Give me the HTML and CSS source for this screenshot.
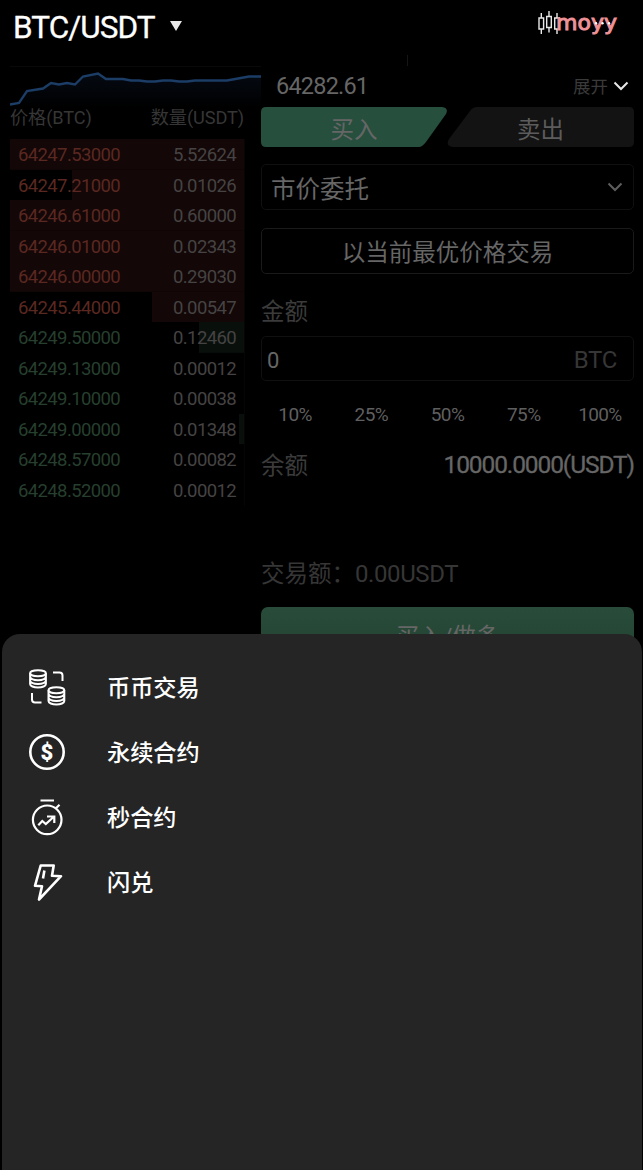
FILE: index.html
```html
<!DOCTYPE html>
<html lang="zh-CN">
<head>
<meta charset="utf-8">
<title>BTC/USDT</title>
<link rel="stylesheet" href="styles.css">
</head>
<body>
<div class="app">
  <header class="header">
    <div class="pair"><span class="pair-name">BTC/USDT</span><span class="caret"></span></div>
    <svg class="logo" width="84" height="30" viewBox="0 0 84 30">
      <g fill="none" stroke="#e8e8e8" stroke-width="1.4">
        <path d="M5.300 3v5M5.300 19v5M3 8h4.600v11H3zM13 1v5.500M13 17.500v5M10.700 6.500h4.600v11h-4.600zM21 3v5M21 19v5M18.700 8h4.600v11h-4.600z"/>
      </g>
      <text class="logo-text" x="20" y="20" textLength="61" lengthAdjust="spacingAndGlyphs">moyy</text>
      <g fill="#fff"><circle cx="60" cy="13.300" r="1.200"/><circle cx="66.500" cy="13.300" r="1.200"/><circle cx="73" cy="13.300" r="1.200"/></g>
    </svg>
  </header>

  <div class="divider"></div>

  <main class="main">
    <section class="book">
      <svg class="chart" width="251" height="42" viewBox="10 66 251 42">
        <defs><linearGradient id="area" x1="0" y1="0" x2="0" y2="1"><stop offset="0" stop-color="#050a12"/><stop offset="1" stop-color="#000"/></linearGradient></defs>
        <path d="M10 66.500h251" stroke="#090909"/>
        <path fill="url(#area)" d="M10 104.500L19 103 27 91 43 88.500 51 83 59 84.500 67 83 75 84.500 83 76.500 98 73.500 106 79H123L131 80.500H139L147 81.500H155L163 80.500H171L179 81.500H187L195 80.500H227L249 76.500H261V108H10z"/>
        <path fill="none" stroke="#1b3d66" stroke-width="2.400" d="M10 104.500L19 103 27 91 43 88.500 51 83 59 84.500 67 83 75 84.500 83 76.500 98 73.500 106 79H123L131 80.500H139L147 81.500H155L163 80.500H171L179 81.500H187L195 80.500H227L249 76.500H261"/>
      </svg>
      <div class="book-head"><span>价格(BTC)</span><span>数量(USDT)</span></div>
      <div class="rows">
        <div class="row sell full"><span>64247.53000</span><b>5.52624</b></div>
        <div class="row sell d2"><span>64247.21000</span><b>0.01026</b></div>
        <div class="row sell full"><span>64246.61000</span><b>0.60000</b></div>
        <div class="row sell full"><span>64246.01000</span><b>0.02343</b></div>
        <div class="row sell full"><span>64246.00000</span><b>0.29030</b></div>
        <div class="row sell d6"><span>64245.44000</span><b>0.00547</b></div>
        <div class="row buy d7"><span>64249.50000</span><b>0.12460</b></div>
        <div class="row buy"><span>64249.13000</span><b>0.00012</b></div>
        <div class="row buy"><span>64249.10000</span><b>0.00038</b></div>
        <div class="row buy d10"><span>64249.00000</span><b>0.01348</b></div>
        <div class="row buy"><span>64248.57000</span><b>0.00082</b></div>
        <div class="row buy"><span>64248.52000</span><b>0.00012</b></div>
      </div>
    </section>

    <section class="trade">
      <div class="quote">
        <span class="price">64282.61</span>
        <span class="expand">展开<svg width="16" height="10" viewBox="0 0 16 10"><path d="M1.500 1.500L8 8l6.500-6.500" fill="none" stroke="#e6e6e6" stroke-width="2"/></svg></span>
      </div>
      <div class="tabs">
        <div class="tab"><svg width="186" height="40" viewBox="0 0 186 40"><path fill="#264f3e" d="M5 0H181q7 1 4 7L165 35q-4 5-7 5H5q-5 0-5-5V5q0-5 5-5z"/></svg><span>买入</span></div>
        <div class="tab"><svg width="187" height="40" viewBox="0 0 187 40"><path fill="#131313" d="M182 0H30q-4 0-7 4L2 32q-4 7 4 8H182q5 0 5-5V5q0-5-5-5z"/></svg><span>卖出</span></div>
      </div>
      <div class="field select"><span>市价委托</span><svg width="16" height="10" viewBox="0 0 16 10"><path d="M1.500 1.500L8 8l6.500-6.500" fill="none" stroke="#5e5e5e" stroke-width="2"/></svg></div>
      <div class="field best">以当前最优价格交易</div>
      <div class="label">金额</div>
      <div class="field amount"><span class="zero">0</span><span class="unit">BTC</span></div>
      <div class="percents"><span>10%</span><span>25%</span><span>50%</span><span>75%</span><span>100%</span></div>
      <div class="balance"><span>余额</span><span class="funds">10000.0000(USDT)</span></div>
      <div class="total">交易额：<span>0.00USDT</span></div>
      <div class="submit">买入/做多</div>
    </section>
  </main>
</div>

<nav class="sheet">
  <div class="item">
    <svg width="40" height="40" viewBox="0 0 40 40" fill="none" stroke="#fff" stroke-width="2">
      <ellipse cx="11" cy="6.200" rx="7.900" ry="3"/><path d="M3.100 6.200v10.800c0 2 3.500 3.500 7.900 3.500s7.900-1.500 7.900-3.500V6.200M3.100 9.800c1 4.500 14.800 4.500 15.800 0M3.100 13.500c1 4.500 14.800 4.500 15.800 0"/>
      <ellipse cx="29.400" cy="23.200" rx="7.900" ry="3"/><path d="M21.500 23.200V34c0 2 3.500 3.500 7.900 3.500s7.900-1.500 7.900-3.500V23.200M21.500 26.800c1 4.500 14.800 4.500 15.800 0M21.500 30.500c1 4.500 14.800 4.500 15.800 0"/>
      <path d="M26 5.500h6.500q3 0 3 3V14M5 26v6.500q0 3 3 3h6.500"/>
    </svg>
    <span>币币交易</span>
  </div>
  <div class="item">
    <svg width="40" height="40" viewBox="0 0 40 40"><circle cx="20" cy="20" r="16.700" fill="none" stroke="#fff" stroke-width="2.600"/><text class="dollar" x="20" y="27.500" text-anchor="middle">$</text></svg>
    <span>永续合约</span>
  </div>
  <div class="item">
    <svg width="40" height="40" viewBox="0 0 40 40" fill="none" stroke="#fff" stroke-width="2.200"><circle cx="20.200" cy="22.800" r="14.300"/><path d="M13.500 3.500H27M28.700 11.500l3.800-3.800M11.300 28.200l4-4.200 3.500 3 8-7.300M20 19.500h7.300v6.500"/></svg>
    <span>秒合约</span>
  </div>
  <div class="item">
    <svg width="40" height="40" viewBox="0 0 40 40" fill="none" stroke="#fff" stroke-width="2.600" stroke-linejoin="round"><path d="M13.700 3.500h13L25 13.800l9 .400L12 37.500l3-13.300-7-.400zM17.400 8.500L16 16.500"/></svg>
    <span>闪兑</span>
  </div>
</nav>
</body>
</html>
```

FILE: styles.css
```css
* { box-sizing: border-box; }
body {
  margin: 0;
  height: 1170px;
  overflow: hidden;
  background: #000;
  color: #666;
  font-family: Roboto, "Noto Sans CJK SC", sans-serif;
}
.app { height: 1170px; }
.header {
  height: 55px;
  padding: 0 23px 0 13px;
  display: flex;
  justify-content: space-between;
}
.pair { display: flex; align-items: center; gap: 15px; height: 54px; color: #fff; }
.pair-name { font-size: 31.500px; letter-spacing: -0.950px; -webkit-text-stroke: 0.300px #fff; }
.caret {
  border: 6.500px solid transparent;
  border-top: 10px solid #e8e8e8;
  border-bottom: 0;
  margin-top: -3px;
}
.logo { margin-top: 10px; }
.logo-text { font: 22px "DejaVu Sans", sans-serif; fill: #ee9298; stroke: #ee9298; stroke-width: 1px; }
.divider { width: 1px; height: 11px; margin-left: 407px; background: #151515; }
.main { display: flex; padding: 0 9px 0 10px; }

.book { width: 251px; flex: none; }
.chart { display: block; }
.book-head {
  display: flex;
  justify-content: space-between;
  width: 234px;
  height: 31px;
  line-height: 20px;
  font-size: 18.200px;
  letter-spacing: -0.100px;
  color: #363636;
}
.rows { width: 235px; border-right: 1px solid #050505; }
.row {
  height: 30.550px;
  padding: 1.500px 8px 0;
  display: flex;
  justify-content: space-between;
  align-items: center;
  font-size: 18.500px;
  letter-spacing: -0.620px;
  background-repeat: no-repeat;
  background-position: right;
}
.row b { font-weight: 400; color: #454343; }
.sell { color: #5b2821; background-image: linear-gradient(#130707, #130707); }
.buy { color: #263f2e; background-image: linear-gradient(#09100c, #09100c); background-size: 0 100%; }
.full { background-size: 100% 100%; }
.d2 { background-size: 172px 100%; }
.d6 { background-size: 92px 100%; }
.d7 { background-size: 45px 100%; }
.d10 { background-size: 5px 100%; }

.trade { flex: 1; display: flex; flex-direction: column; font-size: 23.500px; }
.quote {
  height: 41px;
  padding: 0 5px 1.500px 15px;
  display: flex;
  justify-content: space-between;
  align-items: center;
}
.price { font-size: 23.500px; letter-spacing: -0.800px; }
.expand { display: flex; align-items: center; gap: 5px; font-size: 17.500px; color: #3a3a3a; }
.tabs { display: flex; height: 40px; margin-bottom: 17px; }
.tab { display: grid; grid-template-rows: 40px; place-items: center; flex: 1; }
.tab svg, .tab span { grid-area: 1 / 1; }
.tab span { padding-top: 6px; line-height: 34px; }
.tab:nth-child(2) span { color: #5c5c5c; }
.field {
  height: 46px;
  border: 1px solid #101010;
  border-radius: 5px;
  display: flex;
  align-items: center;
  justify-content: space-between;
}
.select { padding: 0 10px 0 9px; font-size: 24.500px; margin-bottom: 18px; }
.best { justify-content: center; border-color: #1a1a1a; }
.label { height: 62px; line-height: 76px; color: #3b3b3b; }
.amount { height: 45px; padding: 3px 16px 0 5px; }
.zero { font-size: 22px; }
.unit { font-size: 24px; letter-spacing: -0.300px; color: #363636; }
.percents { display: flex; margin: 0 -4px; height: 67px; line-height: 67px; font-size: 19px; letter-spacing: -0.600px; color: #5f5f5f; }
.percents span { flex: 1; text-align: center; }
.balance { display: flex; justify-content: space-between; line-height: 37px; height: 91px; color: #3b3b3b; }
.funds { color: #666; font-size: 24.500px; letter-spacing: -1.100px; line-height: 34px; -webkit-text-stroke: 0.300px #666; }
.total { height: 68px; line-height: 70px; color: #363636; }
.total span { font-size: 24px; letter-spacing: -0.400px; }
.submit {
  height: 62px;
  border-radius: 7px;
  background: linear-gradient(#294c3a, #21402f);
  text-align: center;
  line-height: 61px;
}

.sheet {
  position: fixed;
  left: 2px;
  right: 1px;
  top: 634px;
  bottom: 0;
  padding: 20px 25px;
  border-radius: 18px 18px 0 0;
  background: #252525;
}
.item { display: flex; align-items: center; gap: 40px; height: 65px; font-size: 23.200px; font-weight: 500; color: #fff; }
.item span { margin-top: -2px; }
.dollar { font: 900 22px Roboto, sans-serif; fill: #fff; }
```
